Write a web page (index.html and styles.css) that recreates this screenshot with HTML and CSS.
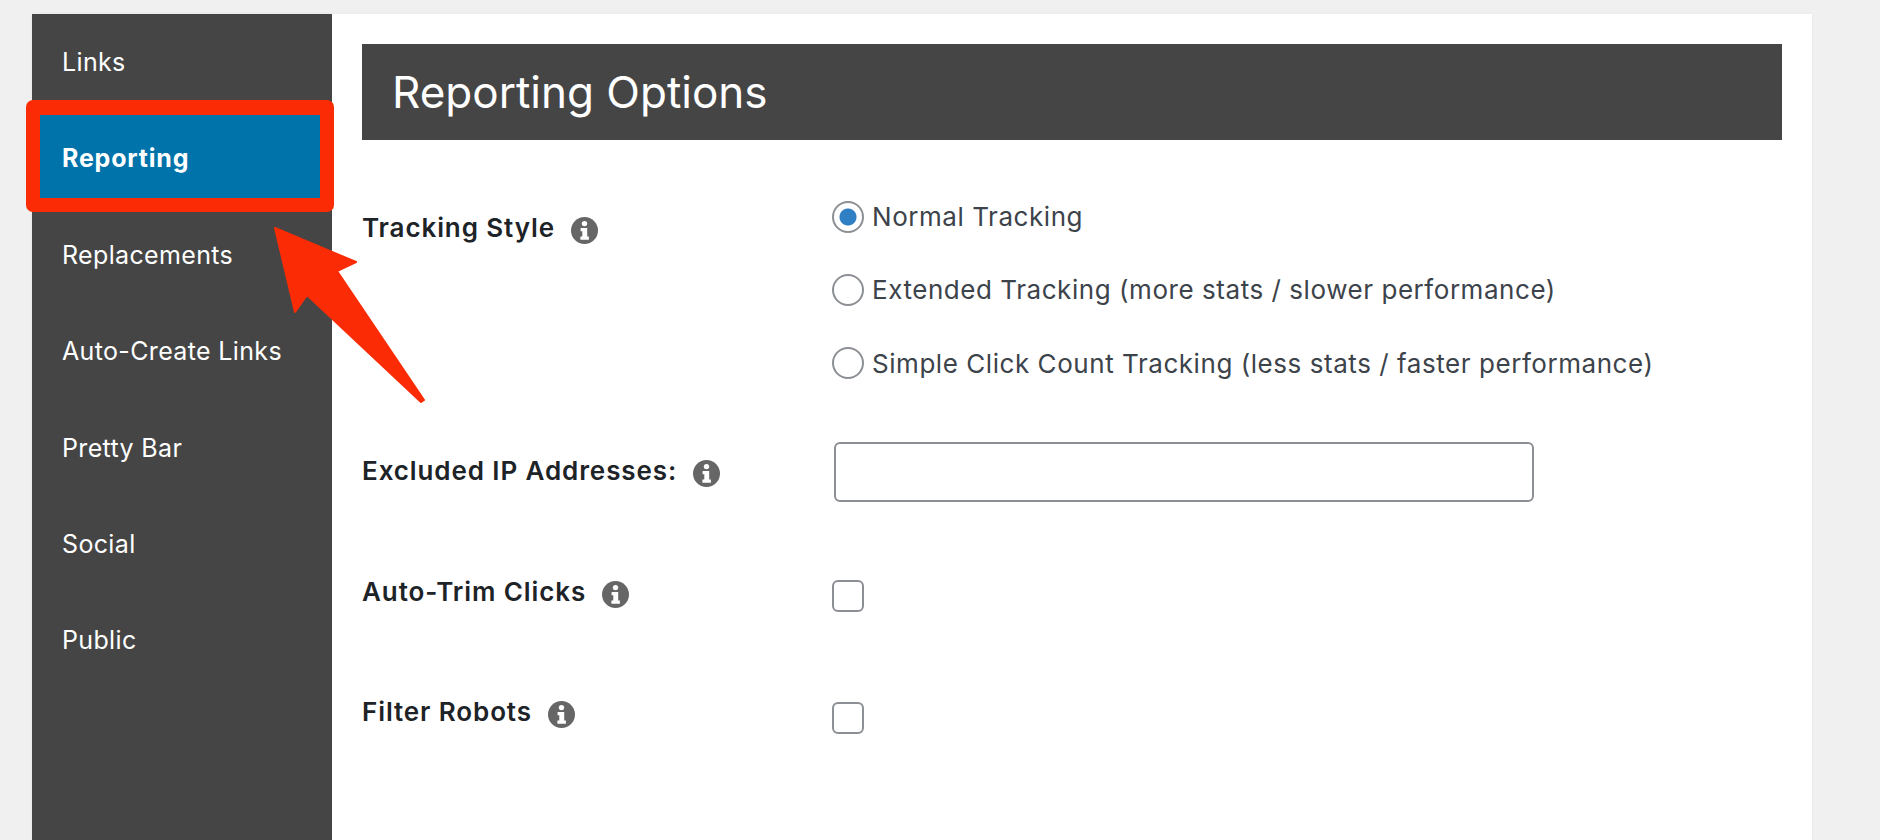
FILE: index.html
```html
<!DOCTYPE html>
<html lang="en">
<head>
    <meta charset="UTF-8">
    <title>Reporting Options</title>
    <link rel="stylesheet" href="styles.css">
</head>
<body>
    <svg class="hidden-defs" width="0" height="0">
        <symbol id="info" viewBox="0 0 27 27">
            <circle cx="13.5" cy="13.5" r="13.5" fill="#666"/>
            <circle cx="13.5" cy="6.6" r="2.7" fill="#fff"/>
            <path d="M9.6 11h6.6v8.6h1.7v3.2H9.4v-3.2h1.9v-5.3H9.6z" fill="#fff"/>
        </symbol>
    </svg>

    <div class="panel">
        <!-- Sidebar -->
        <nav class="sidebar">
            <a class="nav-item" href="#">Links</a>
            <a class="nav-item active" href="#">Reporting</a>
            <a class="nav-item" href="#">Replacements</a>
            <a class="nav-item" href="#">Auto-Create Links</a>
            <a class="nav-item" href="#">Pretty Bar</a>
            <a class="nav-item" href="#">Social</a>
            <a class="nav-item" href="#">Public</a>
        </nav>

        <!-- Options -->
        <main class="content">
            <h1 class="page-title">Reporting Options</h1>

            <div class="form-row row-tracking">
                <div class="row-label">Tracking Style <svg class="info-icon"><use href="#info"/></svg></div>
                <div class="radio-group">
                    <label class="radio-line"><input type="radio" name="tracking" checked> Normal Tracking</label>
                    <label class="radio-line"><input type="radio" name="tracking"> Extended Tracking (more stats / slower performance)</label>
                    <label class="radio-line"><input type="radio" name="tracking"> Simple Click Count Tracking (less stats / faster performance)</label>
                </div>
            </div>

            <div class="form-row row-excluded">
                <div class="row-label">Excluded IP Addresses: <svg class="info-icon"><use href="#info"/></svg></div>
                <div><input class="text-input" type="text"></div>
            </div>

            <div class="form-row row-check">
                <div class="row-label">Auto-Trim Clicks <svg class="info-icon"><use href="#info"/></svg></div>
                <div><input class="check" type="checkbox"></div>
            </div>

            <div class="form-row row-check">
                <div class="row-label">Filter Robots <svg class="info-icon"><use href="#info"/></svg></div>
                <div><input class="check" type="checkbox"></div>
            </div>
        </main>
    </div>

    <!-- Annotation drawn over the screenshot -->
    <div class="callout-frame"></div>
    <svg class="callout-arrow" width="460" height="420" viewBox="0 0 460 420">
        <path d="M275 228L356 262L337 271L424 400L421 402L307 295L295 312Z" fill="#fb2c05" stroke="#fb2c05" stroke-width="2" stroke-linejoin="round"/>
    </svg>
</body>
</html>
```

FILE: styles.css
```css
html, body {
    height: 100%;
}

body {
    margin: 0;
    overflow: hidden;
    background-color: #f0f0f1;
    color: #3c434a;
    font-family: Inter, Roboto, sans-serif;
    font-size: 26px;
    letter-spacing: 0.55px;
}

.hidden-defs {
    position: absolute;
}

.panel {
    display: flex;
    height: 826px;
    margin: 14px 68px 0 32px;
    background-color: #fff;
    box-shadow: 0 0 3px rgba(0, 0, 0, 0.05);
}

.sidebar {
    flex: 0 0 300px;
    background-color: #454545;
}

.nav-item {
    display: block;
    height: 96.4px;
    padding-left: 30px;
    color: #fff;
    font-size: 25px;
    letter-spacing: 0.35px;
    line-height: 96px;
    text-decoration: none;
}

.nav-item.active {
    background-color: #0073aa;
    font-weight: 700;
    letter-spacing: 0.8px;
}

.content {
    flex: 1;
    padding: 30px 30px 0;
}

.page-title {
    height: 96px;
    margin: 0 0 40px;
    padding-left: 30px;
    background-color: #454545;
    color: #fff;
    font-size: 44px;
    font-weight: 400;
    letter-spacing: 0;
    line-height: 96px;
}

.form-row {
    display: grid;
    grid-template-columns: 470px 1fr;
}

.row-label {
    display: flex;
    align-items: center;
    gap: 16px;
    height: 32px;
    color: #1d2327;
    font-weight: 600;
    letter-spacing: 0.9px;
    line-height: 32px;
}

.info-icon {
    flex: none;
    width: 27px;
    height: 27px;
    margin-top: 5px;
}

.row-tracking .row-label {
    margin-top: 32px;
}

.radio-line {
    display: flex;
    align-items: center;
    gap: 8px;
    height: 73.34px;
}

.radio-line input {
    appearance: none;
    flex: none;
    width: 32px;
    height: 32px;
    margin: 0;
    border: 2px solid #8c8f94;
    border-radius: 50%;
    background-color: #fff;
}

.radio-line input:checked {
    background: radial-gradient(circle, #2f7fc4 0 8px, #fff 9px);
}

.row-excluded {
    margin-top: 42px;
}

.row-excluded .row-label {
    margin-top: 13px;
}

.text-input {
    display: block;
    box-sizing: border-box;
    width: 700px;
    height: 60px;
    margin-left: 2px;
    border: 2px solid #8c8f94;
    border-radius: 6px;
    background-color: #fff;
}

.row-check {
    height: 120px;
}

.row-excluded + .row-check {
    margin-top: 74px;
}

.check {
    appearance: none;
    display: block;
    box-sizing: border-box;
    width: 32px;
    height: 32px;
    margin: 4px 0 0;
    border: 2px solid #8c8f94;
    border-radius: 6px;
    background-color: #fff;
}

.row-check:last-child .check {
    margin-top: 6px;
}

/* annotation overlay */
.callout-frame {
    position: absolute;
    left: 26px;
    top: 100px;
    box-sizing: border-box;
    width: 308px;
    height: 112px;
    border: 14px solid #fb2c05;
    border-top-width: 15px;
    border-radius: 7px;
}

.callout-arrow {
    position: absolute;
    left: 0;
    top: 0;
}
```
